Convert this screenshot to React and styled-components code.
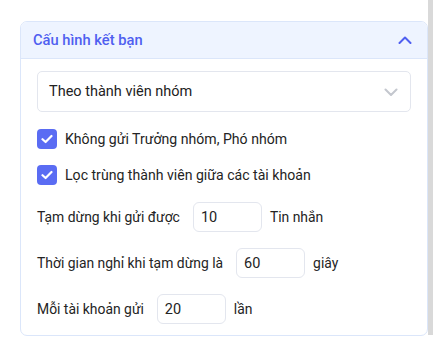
import React from 'react';
import styled, { createGlobalStyle } from 'styled-components';

const GlobalStyle = createGlobalStyle`
  html, body {
    margin: 0;
    padding: 0;
    background: #fff;
  }
  body {
    font-family: Roboto, "Noto Sans", "Liberation Sans", sans-serif;
    color: #242424;
  }
`;

const StyledPage = styled.div`
  display: flex;
  width: 439px;
  height: 351px;
  overflow: hidden;
`;

const StyledMain = styled.div`
  width: 408px;
  padding: 21px 0 0 20px;
`;

const StyledScrollbar = styled.div`
  width: 5px;
  height: 335px;
  background: #d9d9d9;
`;

const StyledCard = styled.div`
  border: 1px solid #dbe6fa;
  border-radius: 7px;
  overflow: hidden;
  background: #fff;
`;

const StyledHeader = styled.div`
  display: flex;
  align-items: center;
  justify-content: space-between;
  height: 36px;
  padding: 0 15px 0 12px;
  background: #eef4ff;
  border-bottom: 1px solid #dbe6fa;
`;

const StyledTitle = styled.span`
  font-size: 14.7px;
  font-weight: 500;
  color: #4f5ff0;
`;

const StyledBody = styled.div`
  display: flex;
  flex-direction: column;
  gap: 16px;
  padding: 12px 16px 11px;
`;

const StyledSelect = styled.div`
  display: flex;
  align-items: center;
  justify-content: space-between;
  box-sizing: border-box;
  height: 41px;
  margin-bottom: 1px;
  padding: 0 12px 0 11px;
  border: 1px solid #e3e6ee;
  border-radius: 5px;
  font-size: 14.5px;
  color: #222;
`;

const StyledCheckRow = styled.label`
  display: flex;
  align-items: center;
  gap: 8px;
  height: 20px;
  font-size: 14.1px;
`;

const StyledBox = styled.span`
  display: flex;
  align-items: center;
  justify-content: center;
  width: 20px;
  height: 20px;
  border-radius: 4px;
  background: #5a6cf3;
`;

const StyledCheckList = styled.div`
  display: flex;
  flex-direction: column;
  gap: 16px;
  margin-bottom: 1px;
`;

const StyledRow = styled.div`
  display: flex;
  align-items: center;
  font-size: 13.9px;
`;

const StyledInput = styled.div`
  display: flex;
  align-items: center;
  box-sizing: border-box;
  width: 69px;
  height: 30px;
  margin: 0 8px 0 13px;
  padding: 0 7px;
  border: 1px solid #e3e6ee;
  border-radius: 6px;
  font-size: 14.5px;
`;

const Check = () => (
  <StyledBox>
    <svg width="12" height="10" viewBox="0 0 12 10">
      <path d="M1.5 5.2 L4.6 8 L10.5 2" fill="none" stroke="#fff" strokeWidth="2.2" strokeLinecap="round" strokeLinejoin="round" />
    </svg>
  </StyledBox>
);

const Chevron = ({ up, color }) => (
  <svg width="14" height="8" viewBox="0 0 14 8">
    <path
      d={up ? 'M1.5 7 L7 1.5 L12.5 7' : 'M1.5 1.5 L7 7 L12.5 1.5'}
      fill="none"
      stroke={color}
      strokeWidth="2"
      strokeLinecap="round"
      strokeLinejoin="round"
    />
  </svg>
);

const NumberRow = ({ label, value, unit }) => (
  <StyledRow>
    <span>{label}</span>
    <StyledInput>{value}</StyledInput>
    <span>{unit}</span>
  </StyledRow>
);

const App = () => (
  <StyledPage>
    <GlobalStyle />
    <StyledMain>
      <StyledCard>
        <StyledHeader>
          <StyledTitle>Cấu hình kết bạn</StyledTitle>
          <Chevron up color="#4f5ff0" />
        </StyledHeader>
        <StyledBody>
          <StyledSelect>
            <span>Theo thành viên nhóm</span>
            <Chevron color="#c4c7ce" />
          </StyledSelect>
          <StyledCheckList>
            <StyledCheckRow>
              <Check />
              Không gửi Trưởng nhóm, Phó nhóm
            </StyledCheckRow>
            <StyledCheckRow>
              <Check />
              Lọc trùng thành viên giữa các tài khoản
            </StyledCheckRow>
          </StyledCheckList>
          <NumberRow label="Tạm dừng khi gửi được" value="10" unit="Tin nhắn" />
          <NumberRow label="Thời gian nghỉ khi tạm dừng là" value="60" unit="giây" />
          <NumberRow label="Mỗi tài khoản gửi" value="20" unit="lần" />
        </StyledBody>
      </StyledCard>
    </StyledMain>
    <StyledScrollbar />
  </StyledPage>
);

export default App;
